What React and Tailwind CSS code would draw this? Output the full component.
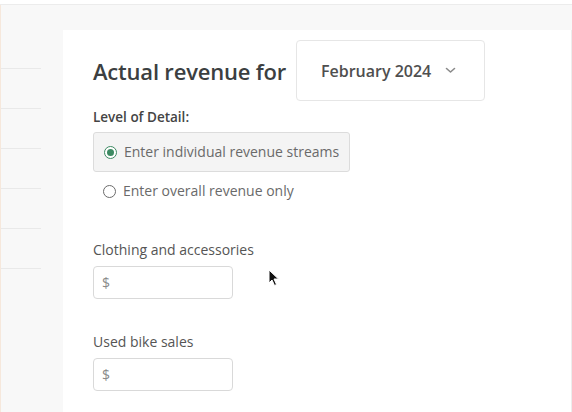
import React from "react";

const font = { fontFamily: "'Open Sans', 'Noto Sans', sans-serif" };

function Radio({ checked }) {
  return checked ? (
    <span className="flex h-[13px] w-[13px] items-center justify-center rounded-full border-[1.5px] border-[#3d8a62] bg-white">
      <span className="h-[7px] w-[7px] rounded-full bg-[#3d8a62]" />
    </span>
  ) : (
    <span className="h-[13px] w-[13px] rounded-full border border-[#6b6b6b] bg-white" />
  );
}

function MoneyInput() {
  return (
    <div className="flex h-[33px] w-[140px] items-center rounded-[4px] border border-[#d9d9d9] bg-white px-2 text-[14px] text-[#8a8a8a]">
      $
    </div>
  );
}

export default function App() {
  return (
    <div className="relative h-[412px] w-[572px] overflow-hidden bg-white" style={font}>
      <div className="h-[5px] border-b border-[#ececec] bg-white" />
      <div className="flex h-[407px] border-l border-[#f6e8dc] bg-[#f8f8f8]">
        <div className="flex w-[62px] flex-col pt-[63px]">
          {[0, 1, 2, 3, 4, 5].map((i) => (
            <div key={i} className="h-[40px] w-[40px] border-t border-[#e9e9e9]" />
          ))}
        </div>
        <div className="mt-[25px] flex flex-1 flex-col border-r border-[#ededed] bg-white pl-[30px] pt-[10px]">
          <div className="flex items-center">
            <h1 className="text-[22px] font-semibold leading-[28px] tracking-[-0.2px] text-[#3c3f41]">Actual revenue for</h1>
            <div className="ml-[10px] flex h-[61px] w-[189px] items-center rounded-[4px] border border-[#e6e6e6] pl-[24px]">
              <span className="text-[16px] font-semibold text-[#4f4f4f]">February 2024</span>
              <svg className="ml-[14px]" width="11" height="7" viewBox="0 0 11 7" fill="none">
                <path d="M1.5 1.5 L5.5 5 L9.5 1.5" stroke="#8a8a8a" strokeWidth="1.6" strokeLinecap="round" strokeLinejoin="round" />
              </svg>
            </div>
          </div>
          <div className="mt-[8px] text-[13.5px] font-semibold leading-[16px] text-[#444]">Level of Detail:</div>
          <div className="mt-[7px] flex h-[40px] w-[257px] items-center gap-[7px] rounded-[3px] border border-[#dcdcdc] bg-[#f4f4f4] pl-[10px]">
            <Radio checked />
            <span className="text-[14px] leading-[20px] text-[#6a6a6a]">Enter individual revenue streams</span>
          </div>
          <div className="mt-[9px] flex h-[20px] items-center gap-[7px] pl-[10px]">
            <Radio />
            <span className="text-[14px] leading-[20px] text-[#6a6a6a]">Enter overall revenue only</span>
          </div>
          <div className="mt-[39px] text-[14px] leading-[20px] text-[#555]">Clothing and accessories</div>
          <div className="mt-[6px]">
            <MoneyInput />
          </div>
          <div className="mt-[33px] text-[14px] leading-[20px] text-[#555]">Used bike sales</div>
          <div className="mt-[6px]">
            <MoneyInput />
          </div>
        </div>
      </div>
      <svg className="absolute left-[268px] top-[269px]" width="12" height="18" viewBox="0 0 12 18">
        <path d="M1 1 L1 14 L4 11 L6.5 16.5 L8.5 15.5 L6 10 L10.5 10 Z" fill="#111" stroke="#fff" strokeWidth="1" />
      </svg>
    </div>
  );
}
